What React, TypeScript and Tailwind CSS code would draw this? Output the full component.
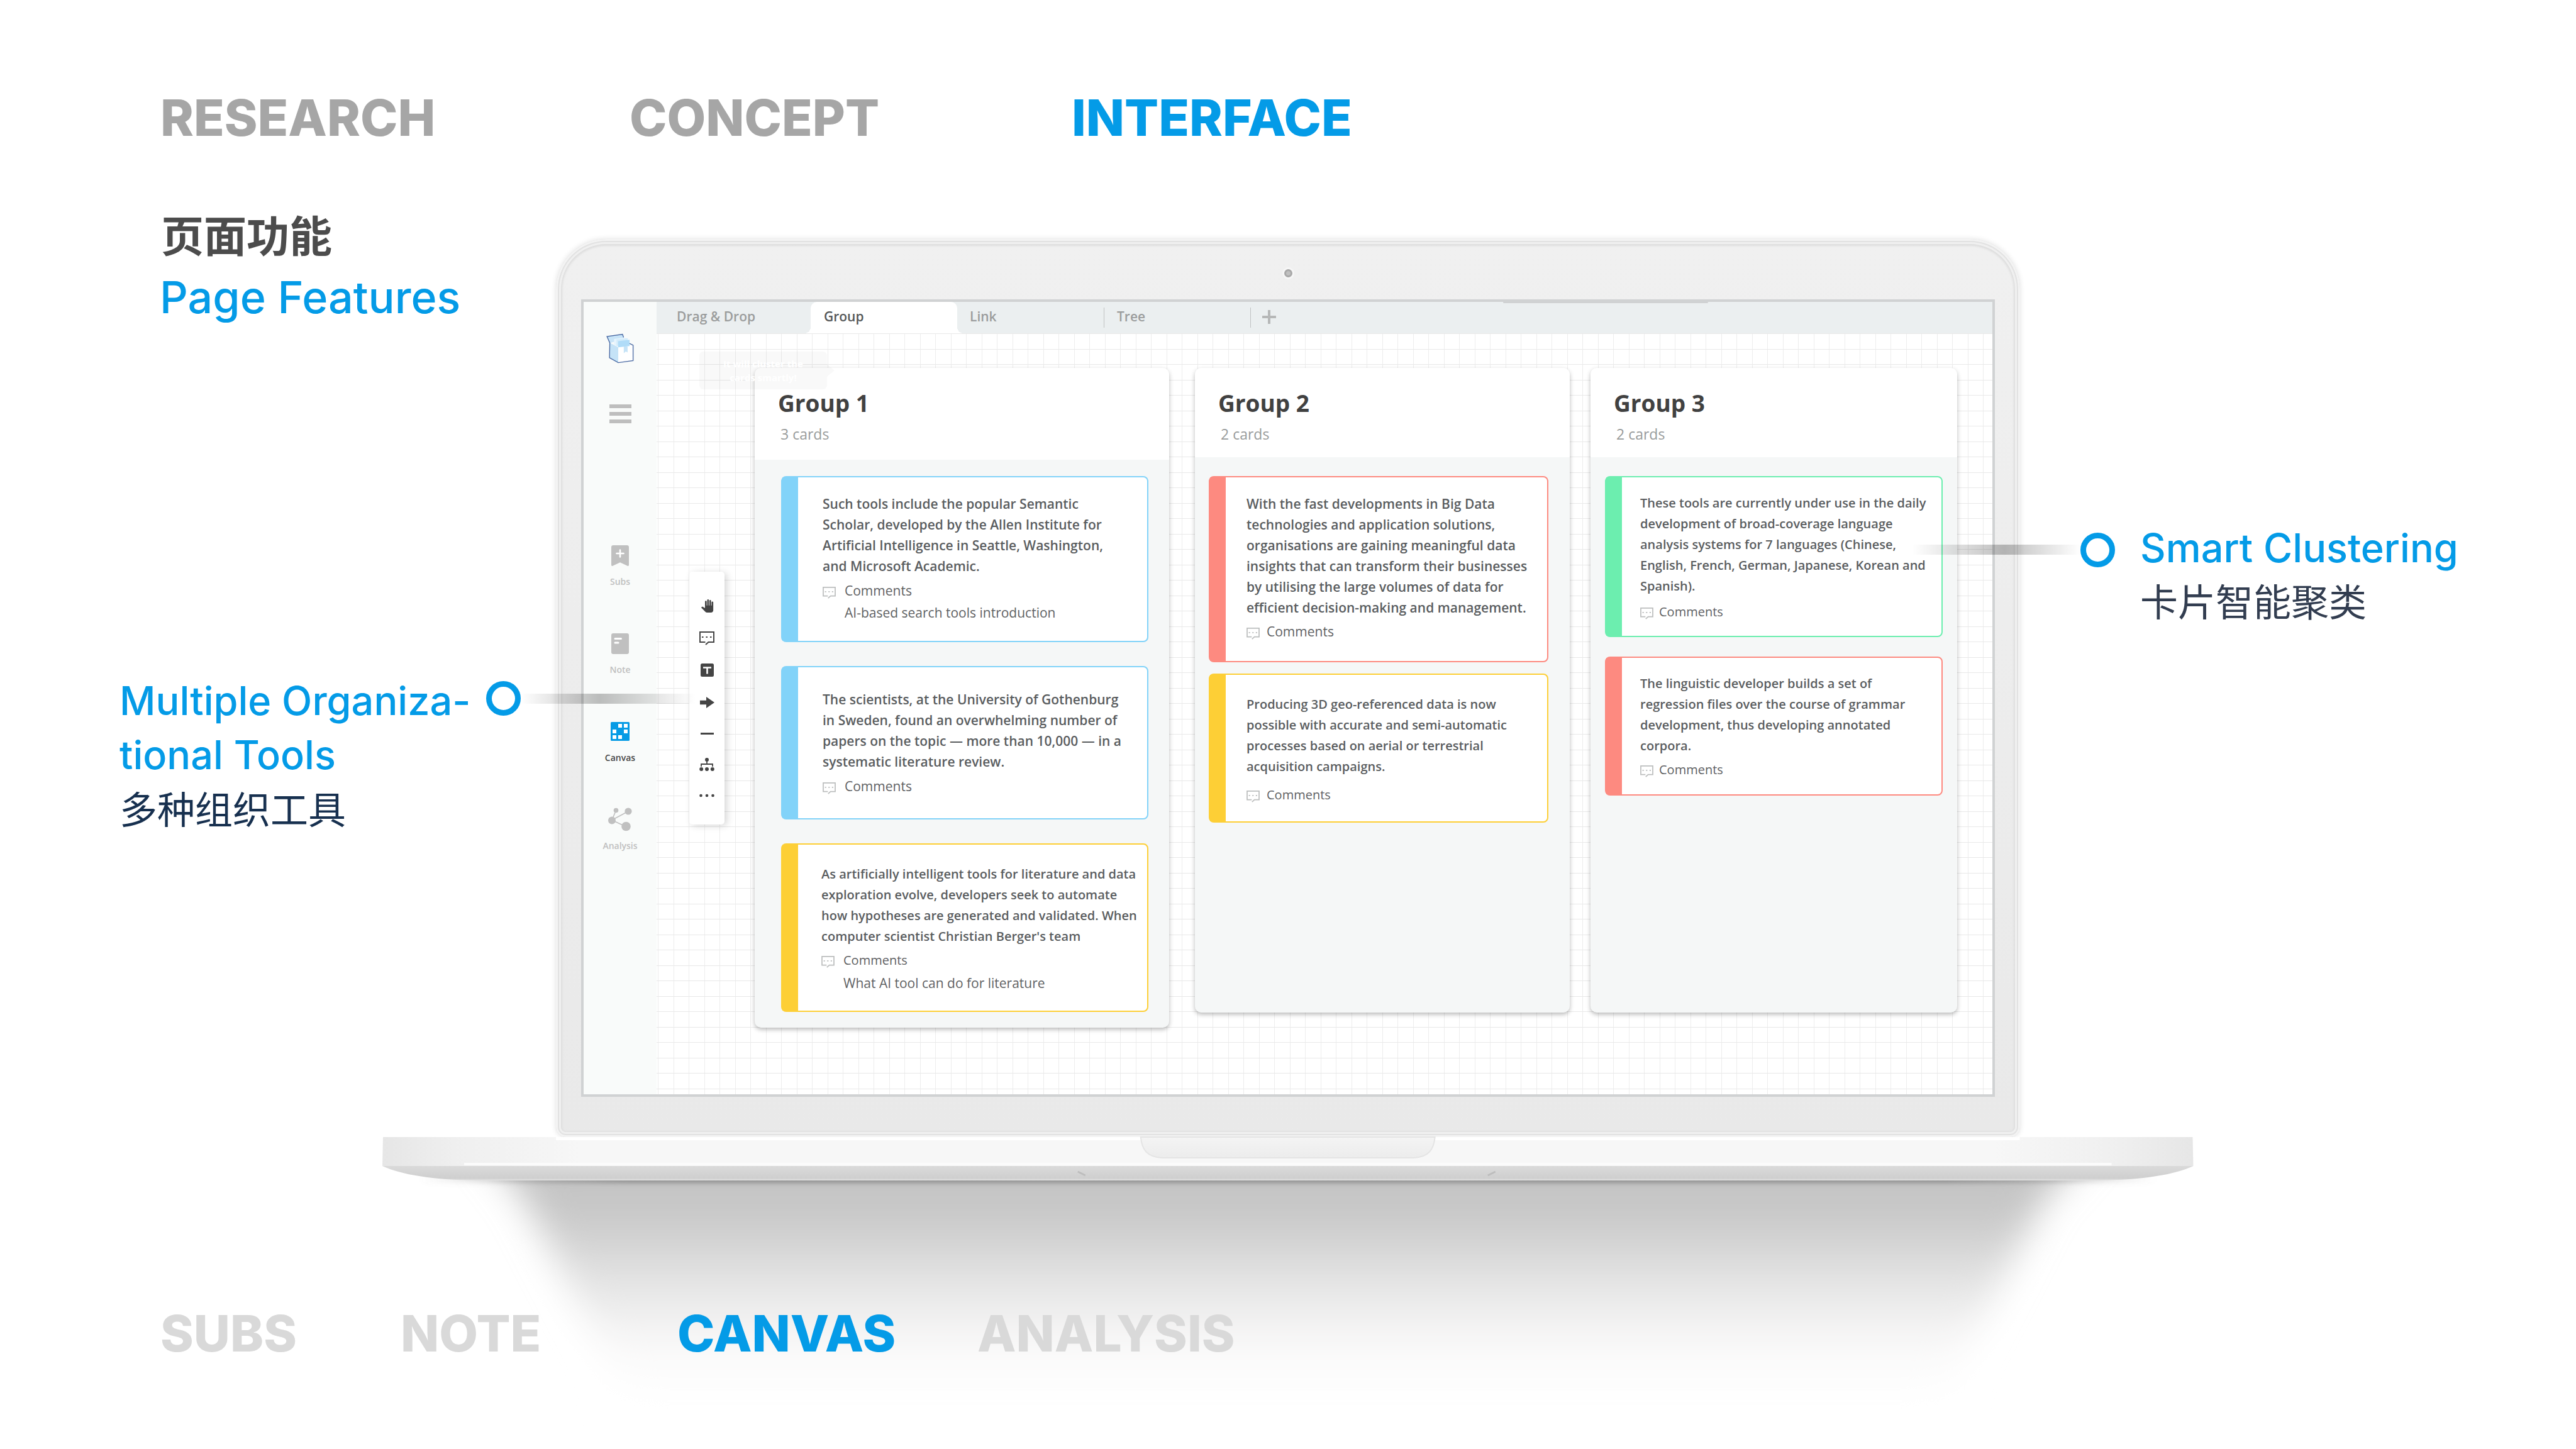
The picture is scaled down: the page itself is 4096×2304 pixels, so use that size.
import React from "react";
import { MdPanTool } from "react-icons/md";

const heading = "font-['Inter',sans-serif]";
const han = "font-['Noto_Sans_CJK_SC',sans-serif]";

function NavLink({ label, tone }: { label: string; tone: string }) {
  return (
    <a href={`#${label.toLowerCase()}`} className={`${heading} text-[80px] leading-[80px] font-extrabold ${tone}`}>
      {label}
    </a>
  );
}

function CommentIcon({ className }: { className: string }) {
  return (
    <svg viewBox="0 0 24 22" fill="none" stroke="currentColor" strokeWidth="2" className={className} aria-hidden="true">
      <path d="M9.5 17H1V1h22v16h-8.5L10 21" />
      <path d="M4 9h2.5M10.5 9h2.5M17 9h2.5" />
    </svg>
  );
}

function Logo() {
  return (
    <svg viewBox="420 710 196 212" className="h-[48px] w-[44px]" aria-hidden="true">
      <path d="M425 732 535 716 545 745 500 760 447 778Z" fill="#c9e5f8" />
      <path d="M447 778 505 808 610 793V901L505 917 443 882Z" fill="#fff" />
      <path d="M445 776 505 808V917L443 882Z" fill="#c5e3f7" />
      <path d="M475 749 530 741 572 745V790L500 800 475 790Z" fill="#e6f4fd" />
      <path d="M492 752 572 744V790L492 800Z" fill="#d3ecfb" />
      <path d="M504 765 585 755V799L504 808Z" fill="#b0dcf8" />
      <path d="M544 803 571 800V845L558 837 544 850Z" fill="#c5e3f7" />
      <path d="M543 738 535 716 425 732 445 777 443 882 505 917 610 903V793L585 781" fill="none" stroke="#4b6aa3" strokeWidth="6" />
    </svg>
  );
}

function SideItem({ label, active, children }: { label: string; active?: boolean; children: React.ReactNode }) {
  return (
    <button type="button" className={`flex w-full flex-col items-center ${active ? "text-[#454545]" : "text-[#c0c0c0]"}`}>
      <span className="flex h-[38px] items-center">{children}</span>
      <span className="mt-[13px] text-[14px] leading-[20px] font-semibold">{label}</span>
    </button>
  );
}

function Sidebar() {
  return (
    <aside className="flex w-[116px] shrink-0 flex-col items-center bg-[#f9fbfa]">
      <div className="mt-[50px]">
        <Logo />
      </div>
      <button type="button" aria-label="Menu" className="mt-[65px] flex w-[35px] flex-col gap-[6px]">
        <span className="h-[6px] bg-[#bebebe]" />
        <span className="h-[6px] bg-[#bebebe]" />
        <span className="h-[6px] bg-[#bebebe]" />
      </button>
      <div className="mt-[191px] flex w-full flex-col gap-[69px]">
        <SideItem label="Subs">
          <svg viewBox="0 0 28 33" className="h-[33px] w-[28px]" aria-hidden="true">
            <path d="M3 0h22a3 3 0 0 1 3 3v28.500a1.500 1.500 0 0 1-2.300 1.200L14 27.300 2.300 32.700A1.500 1.500 0 0 1 0 31.500V3a3 3 0 0 1 3-3Z" fill="#c0c0c0" />
            <path d="M14 7.500v11M8.500 13h11" stroke="#fff" strokeWidth="2.600" strokeLinecap="round" />
          </svg>
        </SideItem>
        <SideItem label="Note">
          <svg viewBox="0 0 28 33" className="h-[33px] w-[28px]" aria-hidden="true">
            <rect width="28" height="33" rx="3" fill="#c0c0c0" />
            <path d="M6 8.500h9.500M6 15h5" stroke="#fff" strokeWidth="3" strokeLinecap="round" />
          </svg>
        </SideItem>
        <SideItem label="Canvas" active>
          <svg viewBox="0 0 30 30" className="size-[30px]" aria-hidden="true">
            <rect width="30" height="30" rx="1.500" fill="#069be5" />
            <path d="M12 3h6v6h-6zM21 3h6v6h-6zM3 12h6v6H3zM21 12h6v6h-6zM3 21h6v6H3zM12 21h6v6h-6z" fill="#fff" />
          </svg>
        </SideItem>
        <SideItem label="Analysis">
          <svg viewBox="0 0 38 38" className="size-[38px]" aria-hidden="true">
            <path d="M12.500 4.500 6 20 32 6M6 20l22.500 10.500" fill="none" stroke="#c0c0c0" strokeWidth="1.600" />
            <g fill="#c0c0c0">
              <circle cx="12.500" cy="4.500" r="3.800" />
              <circle cx="6" cy="20.500" r="6" />
              <circle cx="32" cy="6" r="5.600" />
              <circle cx="28.500" cy="30" r="7.300" />
            </g>
          </svg>
        </SideItem>
      </div>
    </aside>
  );
}

function TabBar() {
  return (
    <div role="tablist" className="relative flex h-[50px] bg-[#ebeff0] text-[21px] font-semibold text-[#9b9d9d]">
      <button type="button" role="tab" className="w-[245px] pb-[3px] pl-[32px] text-left">Drag &amp; Drop</button>
      <button
        type="button"
        role="tab"
        aria-selected="true"
        className="relative w-[233px] rounded-t-[10px] bg-white pb-[3px] pl-[21px] text-left text-[#555859] before:absolute before:bottom-0 before:-left-[10px] before:size-[10px] before:bg-[radial-gradient(circle_at_0_0,transparent_10px,white_10px)] after:absolute after:-right-[10px] after:bottom-0 after:size-[10px] after:bg-[radial-gradient(circle_at_100%_0,transparent_10px,white_10px)]"
      >
        Group
      </button>
      <button type="button" role="tab" className="w-[233px] pb-[3px] pl-[20px] text-left">Link</button>
      <div className="my-[9px] w-px bg-[#bfc2c2]" />
      <button type="button" role="tab" className="w-[232px] pb-[3px] pl-[20px] text-left">Tree</button>
      <div className="my-[9px] w-px bg-[#bfc2c2]" />
      <button type="button" aria-label="Add tab" className="ml-[18px] pb-[2px]">
        <svg viewBox="0 0 22 22" className="size-[22px]" stroke="#b6b8b8" strokeWidth="4" aria-hidden="true">
          <path d="M11 0v22M0 11h22" />
        </svg>
      </button>
      <div className="absolute top-0 right-[452px] h-[2px] w-[326px] rounded-full bg-[#cfd1d2]" />
    </div>
  );
}

const tool = "flex w-full items-center justify-center";

function Palette() {
  return (
    <div className="mt-[324px] ml-[52px] flex w-[56px] shrink-0 flex-col items-center self-start rounded-[5px] bg-white pt-[29px] pb-[22px] text-[#444] shadow-[4px_2px_12px_rgba(0,0,0,0.16)]">
      <button type="button" aria-label="Hand" className={`h-[51px] ${tool}`}>
        <MdPanTool className="size-[21px]" />
      </button>
      <button type="button" aria-label="Comment" className={`h-[51px] ${tool}`}>
        <CommentIcon className="h-[22px] w-[24px]" />
      </button>
      <button type="button" aria-label="Text" className={`h-[51px] ${tool}`}>
        <svg viewBox="0 0 21 21" className="size-[21px]" aria-hidden="true">
          <rect width="21" height="21" rx="2.500" fill="#444" />
          <path d="M4 6.500h13M10.500 6.500v10" stroke="#fff" strokeWidth="2.600" />
        </svg>
      </button>
      <button type="button" aria-label="Arrow" className={`h-[51px] ${tool}`}>
        <svg viewBox="0 0 23 18" className="h-[18px] w-[23px]" aria-hidden="true">
          <path d="M0 5.800h10V0l13 9-13 9v-5.800H0Z" fill="#444" />
        </svg>
      </button>
      <button type="button" aria-label="Line" className={`h-[49px] ${tool}`}>
        <span className="h-[3px] w-[21px] bg-[#444]" />
      </button>
      <button type="button" aria-label="Tree" className={`h-[49px] ${tool}`}>
        <svg viewBox="0 0 24 21" className="h-[21px] w-[24px]" aria-hidden="true">
          <path d="M12 4v6M3 14v-4h18v4" fill="none" stroke="#444" strokeWidth="1.800" />
          <g fill="#444">
            <circle cx="12" cy="3" r="3" />
            <circle cx="3.200" cy="18" r="3" />
            <circle cx="12" cy="18" r="3" />
            <circle cx="20.800" cy="18" r="3" />
          </g>
        </svg>
      </button>
      <button type="button" aria-label="More" className={`h-[49px] ${tool}`}>
        <svg viewBox="0 0 24 6" className="h-[6px] w-[24px]" fill="#444" aria-hidden="true">
          <circle cx="2.500" cy="3" r="2.300" />
          <circle cx="12" cy="3" r="2.300" />
          <circle cx="21.500" cy="3" r="2.300" />
        </svg>
      </button>
    </div>
  );
}

type CardProps = {
  color: string;
  lines: string[];
  note?: string;
  className: string;
  textClass: string;
  noteClass: string;
  iconClass: string;
};

function Card({ color, lines, note, className, textClass, noteClass, iconClass }: CardProps) {
  return (
    <article className={`flex rounded-[8px] border-2 bg-white ${color}`}>
      <div className="w-[25px] shrink-0 bg-current" />
      <div className={className}>
        <p className={`leading-[33px] font-semibold whitespace-nowrap text-[#5a5d5f] ${textClass}`}>
          {lines.map((line) => (
            <span key={line} className="block">{line}</span>
          ))}
        </p>
        <div className={`flex text-[#5f6264] ${noteClass}`}>
          <CommentIcon className={`mt-[11px] h-[19px] w-[21px] shrink-0 text-[#bcbebe] ${iconClass}`} />
          <div>
            <p>Comments</p>
            {note && <p className="text-[21px]">{note}</p>}
          </div>
        </div>
      </div>
    </article>
  );
}

const blue = "border-[#82d3f9] text-[#82d3f9]";
const yellow = "border-[#fdcf36] text-[#fdcf36]";
const red = "border-[#fd8a80] text-[#fd8a80]";
const green = "border-[#6ceeaf] text-[#6ceeaf]";

function Group({ title, count, size, header, body, children }: { title: string; count: string; size: string; header: string; body: string; children: React.ReactNode }) {
  return (
    <section className={`flex basis-0 flex-col rounded-[10px] bg-[#f5f7f7] shadow-[0_3px_7px_rgba(0,0,0,0.28)] ${size}`}>
      <header className={`rounded-t-[10px] bg-white pt-[32px] pl-[37px] ${header}`}>
        <h3 className="text-[37px] leading-[48px] font-bold text-[#414141]">{title}</h3>
        <p className="mt-[9px] pl-[4px] text-[23px] leading-[32px] text-[#999c9c]">{count}</p>
      </header>
      <div className={`flex flex-col ${body}`}>{children}</div>
    </section>
  );
}

function Board() {
  return (
    <div className="relative flex grow bg-white bg-[linear-gradient(#e9e9e9_1px,transparent_1px),linear-gradient(#e9e9e9_1px,transparent_1px),linear-gradient(90deg,#ededed_1px,transparent_1px),linear-gradient(90deg,#ededed_1px,transparent_1px)] bg-size-[49px_49px] bg-position-[0_0,0_25px,2px_0,27px_0] pt-[55px] pr-[56px] pb-[106px]">
      <Palette />
      <div className="ml-[48px] flex grow">
        <Group title="Group 1" count="3 cards" size="grow-[659]" header="pb-[25px]" body="gap-[38px] pt-[26px] pr-[33px] pb-[25px] pl-[42px]">
          <Card
            color={blue}
            className="pt-[26px] pb-[27px] pl-[39px]"
            textClass="text-[21px]"
            noteClass="mt-[5px] text-[21px] leading-[35px]"
            iconClass="mr-[14px]"
            lines={["Such tools include the popular Semantic", "Scholar, developed by the Allen Institute for", "Artificial Intelligence in Seattle, Washington,", "and Microsoft Academic."]}
            note="AI-based search tools introduction"
          />
          <Card
            color={blue}
            className="pt-[35px] pb-[33px] pl-[39px]"
            textClass="text-[21px]"
            noteClass="mt-[5px] text-[21px] leading-[35px]"
            iconClass="mr-[14px]"
            lines={["The scientists, at the University of Gothenburg", "in Sweden, found an overwhelming number of", "papers on the topic — more than 10,000 — in a", "systematic literature review."]}
          />
          <Card
            color={yellow}
            className="pt-[30px] pb-[26px] pl-[37px]"
            textClass="text-[20px]"
            noteClass="mt-[4px] text-[20px] leading-[36px]"
            iconClass="mr-[14px]"
            lines={["As artificially intelligent tools for literature and data", "exploration evolve, developers seek to automate", "how hypotheses are generated and validated. When", "computer scientist Christian Berger's team"]}
            note="What AI tool can do for literature"
          />
        </Group>
        <Group title="Group 2" count="2 cards" size="mb-[24px] ml-[41px] grow-[596]" header="pb-[21px]" body="gap-[18px] pt-[30px] pr-[34px] pl-[22px]">
          <Card
            color={red}
            className="pt-[26px] pb-[29px] pl-[33px]"
            textClass="text-[21px]"
            noteClass="mt-[4px] text-[21px] leading-[35px]"
            iconClass="mr-[11px]"
            lines={["With the fast developments in Big Data", "technologies and application solutions,", "organisations are gaining meaningful data", "insights that can transform their businesses", "by utilising the large volumes of data for", "efficient decision-making and management."]}
          />
          <Card
            color={yellow}
            className="pt-[30px] pb-[25px] pl-[33px]"
            textClass="text-[20px]"
            noteClass="mt-[11px] text-[20px] leading-[35px]"
            iconClass="mr-[11px]"
            lines={["Producing 3D geo-referenced data is now", "possible with accurate and semi-automatic", "processes based on aerial or terrestrial", "acquisition campaigns."]}
          />
        </Group>
        <Group title="Group 3" count="2 cards" size="mb-[24px] ml-[33px] grow-[583]" header="pb-[21px]" body="gap-[31px] pt-[30px] pr-[23px] pl-[23px]">
          <Card
            color={green}
            className="pt-[24px] pb-[21px] pl-[29px]"
            textClass="text-[20px]"
            noteClass="mt-[7px] text-[20px] leading-[35px]"
            iconClass="mr-[9px]"
            lines={["These tools are currently under use in the daily", "development of broad-coverage language", "analysis systems for 7 languages (Chinese,", "English, French, German, Japanese, Korean and", "Spanish)."]}
          />
          <Card
            color={red}
            className="pt-[24px] pb-[22px] pl-[29px]"
            textClass="text-[20px]"
            noteClass="mt-[4px] text-[20px] leading-[35px]"
            iconClass="mr-[9px]"
            lines={["The linguistic developer builds a set of", "regression files over the course of grammar", "development, thus developing annotated", "corpora."]}
          />
        </Group>
      </div>
      <div className="absolute top-[29px] left-[68px] w-[203px] rounded-[6px] bg-black/[0.022] py-[8px] text-center text-[15px] leading-[22px] font-bold text-white">
        It will cluster the
        <br />
        cards smartly!
        <div className="absolute top-[20px] left-full border-y-[10px] border-l-[12px] border-y-transparent border-l-black/[0.022]" />
      </div>
    </div>
  );
}

function Laptop() {
  return (
    <div className="mt-[49px] rounded-t-[80px] rounded-b-[16px] bg-linear-to-b from-[#f0f0f0] to-[#e9e9e9] px-[40px] pb-[64px] shadow-[0_0_8px_rgba(0,0,0,0.12),inset_0_0_0_3px_#f3f3f3,inset_0_0_0_5px_#e2e2e2,inset_0_0_0_8px_#f0f0f0,inset_0_1px_3px_10px_#dedede]">
      <div className="flex h-[96px] items-center justify-center pt-[13px]">
        <div className="size-[13px] rounded-full border-[3px] border-[#a8a8a8] bg-[#c0c0c0] shadow-[0_0_0_3px_#f6f6f6]" />
      </div>
      <div className="flex border-4 border-[#d0d2d3] bg-white font-['Open_Sans',sans-serif]">
        <Sidebar />
        <div className="flex grow flex-col">
          <TabBar />
          <Board />
        </div>
      </div>
    </div>
  );
}

function LaptopBase() {
  return (
    <svg viewBox="0 0 2880 497" className="w-full overflow-visible [grid-area:1/1]" aria-hidden="true">
      <defs>
        <linearGradient id="face" x1="0" x2="1" y1="0" y2="0">
          <stop offset="0" stopColor="#e6e6e6" />
          <stop offset="0.040" stopColor="#efefef" />
          <stop offset="0.110" stopColor="#f7f7f7" />
          <stop offset="0.890" stopColor="#f7f7f7" />
          <stop offset="0.960" stopColor="#efefef" />
          <stop offset="1" stopColor="#e6e6e6" />
        </linearGradient>
        <linearGradient id="under" x1="0" x2="0" y1="0" y2="1">
          <stop offset="0" stopColor="#dadada" />
          <stop offset="0.850" stopColor="#cfcfcf" />
          <stop offset="1" stopColor="#e2e2e2" />
        </linearGradient>
        <linearGradient id="cast" x1="0" x2="0" y1="50" y2="430" gradientUnits="userSpaceOnUse">
          <stop offset="0" stopColor="#c4c4c4" />
          <stop offset="0.160" stopColor="#c6c6c6" />
          <stop offset="0.280" stopColor="#d1d1d1" />
          <stop offset="0.450" stopColor="#e2e2e2" />
          <stop offset="0.600" stopColor="#eeeeee" />
          <stop offset="0.700" stopColor="#f7f6f6" />
          <stop offset="0.820" stopColor="#fcfcfc" />
          <stop offset="1" stopColor="#ffffff" />
        </linearGradient>
        <linearGradient id="notch" x1="0" x2="0" y1="0" y2="1">
          <stop offset="0" stopColor="#f4f4f4" />
          <stop offset="1" stopColor="#ececec" />
        </linearGradient>
        <linearGradient id="contact" x1="0" x2="1" y1="0" y2="0">
          <stop offset="0" stopColor="#777" stopOpacity="0" />
          <stop offset="0.120" stopColor="#777" stopOpacity="0.850" />
          <stop offset="0.880" stopColor="#777" stopOpacity="0.850" />
          <stop offset="1" stopColor="#777" stopOpacity="0" />
        </linearGradient>
        <filter id="soft" x="-10%" y="-30%" width="120%" height="160%">
          <feGaussianBlur stdDeviation="28" />
        </filter>
        <filter id="thin" x="-5%" y="-200%" width="110%" height="500%">
          <feGaussianBlur stdDeviation="4" />
        </filter>
        <clipPath id="below">
          <rect x="0" y="58" width="2880" height="440" />
        </clipPath>
      </defs>
      <g clipPath="url(#below)">
        <path d="M150 0H2730L2642 100 2516 340 2480 450H390L352 340 226 100Z" fill="url(#cast)" filter="url(#soft)" />
        <rect x="60" y="63" width="2760" height="9" fill="url(#contact)" filter="url(#thin)" />
      </g>
      <path d="M0 46C30 60 80 68 150 69H2730C2800 68 2850 60 2880 46Z" fill="url(#under)" />
      <path d="M1 0H2879L2880 46H0Z" fill="url(#face)" />
      <rect x="276" y="0" width="2328" height="5" fill="#ffffff" />
      <rect x="130" y="41" width="2620" height="4" fill="#fbfbfb" />
      <path d="M1206 0H1674C1672 20 1664 32 1640 33H1240C1216 32 1208 20 1206 0Z" fill="url(#notch)" stroke="#e4e4e4" strokeWidth="2" />
      <path d="M1106 55 1118 61M1770 55 1758 61" stroke="#bdbdbd" strokeWidth="3" fill="none" />
    </svg>
  );
}

const ring = "size-[55px] shrink-0 rounded-full border-[9px] border-[#049be7]";

export default function App() {
  return (
    <main className="flex min-h-screen w-full flex-col overflow-hidden bg-white">
      <nav aria-label="Sections" className="grid grid-cols-[746px_703px_auto] pt-[147px] pl-[255px]">
        <NavLink label="RESEARCH" tone="text-[#a6a6a6]" />
        <NavLink label="CONCEPT" tone="text-[#a6a6a6]" />
        <NavLink label="INTERFACE" tone="text-[#049be7]" />
      </nav>

      <div className="mt-[104px] grid grid-cols-[minmax(0,884fr)_minmax(0,2328fr)_minmax(0,884fr)] items-start">
        <div className="relative z-10">
          <h1 className={`${han} pl-[256px] text-[68px] leading-[82px] font-bold text-[#4c4c4c]`}>页面功能</h1>
          <h2 className={`${heading} mt-[18px] pl-[254px] text-[70px] leading-[84px] font-medium text-[#049be7]`}>Page Features</h2>
          <div className="mt-[556px] flex items-start pl-[190px]">
            <div className="w-[583px] shrink-0">
              <p className={`${heading} text-[63px] leading-[86px] font-medium whitespace-nowrap text-[#049be7]`}>
                Multiple Organiza-
                <br />
                tional Tools
              </p>
              <p className={`${han} text-[60px] leading-[82px] text-[#17304f]`}>多种组织工具</p>
            </div>
            <div className={`mt-[12px] ${ring}`} />
            <div className="mt-[32px] h-[16px] w-[278px] shrink-0 bg-linear-to-r from-black/0 via-black/25 via-45% to-black/0" />
          </div>
        </div>

        <Laptop />

        <div className="relative z-10 mt-[498px] flex items-start">
          <div className="mt-[37px] -ml-[172px] h-[16px] w-[268px] shrink-0 bg-linear-to-r from-black/0 via-black/25 via-55% to-black/0" />
          <div className={`mt-[18px] ${ring}`} />
          <div className="ml-[40px]">
            <p className={`${heading} text-[63px] leading-[84px] font-medium whitespace-nowrap text-[#049be7]`}>Smart Clustering</p>
            <p className={`${han} text-[60px] leading-[82px] text-[#323d50]`}>卡片智能聚类</p>
          </div>
        </div>
      </div>

      <footer className="grid grow">
        <div className="mx-auto w-[70.3%] [grid-area:1/1]">
          <LaptopBase />
        </div>
        <nav aria-label="Pages" className="relative grid grid-cols-[382px_440px_477px_auto] self-start pt-[272px] pl-[255px] [grid-area:1/1]">
          <NavLink label="SUBS" tone="text-[#d9d9d9]" />
          <NavLink label="NOTE" tone="text-[#d9d9d9]" />
          <NavLink label="CANVAS" tone="text-[#049be7]" />
          <NavLink label="ANALYSIS" tone="text-[#d9d9d9]" />
        </nav>
      </footer>
    </main>
  );
}
